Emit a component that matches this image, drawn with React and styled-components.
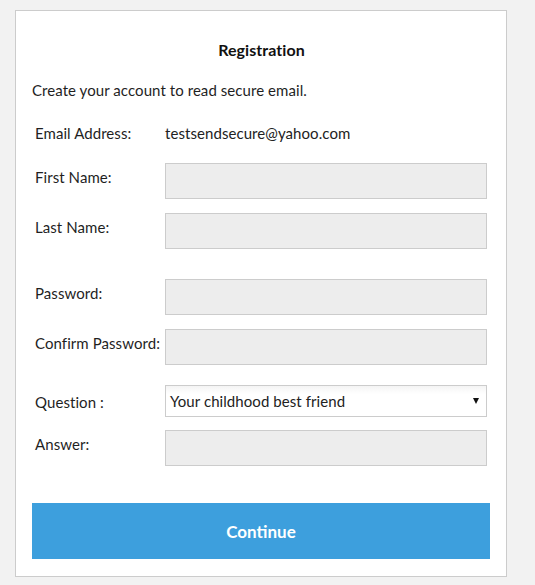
import React from "react";
import styled, { createGlobalStyle } from "styled-components";

const GlobalStyle = createGlobalStyle`
  html, body {
    margin: 0;
    padding: 0;
    background: #f2f2f2;
    font-family: Lato, "Liberation Sans", sans-serif;
    color: #1f1f1f;
    letter-spacing: 0.07px;
  }
  * { box-sizing: border-box; }
`;

const fields = [
  { label: "First Name:", gap: 20 },
  { label: "Last Name:", gap: 14 },
  { label: "Password:", gap: 30, type: "password" },
  { label: "Confirm Password:", gap: 14, type: "password" },
];

const App = () => {
  return (
    <>
      <GlobalStyle />
      <Card>
        <Title>Registration</Title>
        <Intro>Create your account to read secure email.</Intro>
        <Form>
          <Row $gap={0}>
            <Label $pt={0}>Email Address:</Label>
            <Value>testsendsecure@yahoo.com</Value>
          </Row>
          {fields.map((f) => (
            <Row key={f.label} $gap={f.gap}>
              <Label>{f.label}</Label>
              <Input type={f.type || "text"} />
            </Row>
          ))}
          <Row $gap={20}>
            <Label $pt={7}>Question :</Label>
            <Select>
              <span>Your childhood best friend</span>
              <Caret />
            </Select>
          </Row>
          <Row $gap={13}>
            <Label>Answer:</Label>
            <Input type="text" />
          </Row>
        </Form>
        <Button>Continue</Button>
      </Card>
    </>
  );
};

export default App;

const Card = styled.div`
  margin: 10px 0 0 15px;
  width: 492px;
  background: #fff;
  border: 1px solid #cccccc;
  padding: 29px 15px 17px 16px;
`;

const Title = styled.h1`
  margin: 0;
  text-align: center;
  font-size: 16px;
  line-height: 20px;
  font-weight: 700;
  color: #111;
`;

const Intro = styled.p`
  margin: 20px 0 0;
  font-size: 15px;
  line-height: 20px;
`;

const Form = styled.div`
  margin: 23px 3px 0 3px;
`;

const Row = styled.div`
  display: grid;
  grid-template-columns: 130px 322px;
  align-items: start;
  margin-top: ${(p) => p.$gap}px;
`;

const Label = styled.label`
  font-size: 15px;
  line-height: 20px;
  padding-top: ${(p) => (p.$pt === undefined ? 4 : p.$pt)}px;
  white-space: nowrap;
`;

const Value = styled.span`
  font-size: 15px;
  line-height: 20px;
  color: #222;
`;

const Input = styled.input`
  display: block;
  width: 322px;
  height: 36px;
  margin: 0;
  background: #ededed;
  border: 1px solid #cccccc;
  font-family: inherit;
  font-size: 15px;
  outline: none;
`;

const Select = styled.div`
  height: 32px;
  display: flex;
  align-items: center;
  justify-content: space-between;
  padding: 0 7px 0 4px;
  background: linear-gradient(#f4f4f4, #ffffff 8px);
  border: 1px solid #cccccc;
  font-size: 15px;
  color: #222;
`;

const Caret = styled.span`
  width: 0;
  height: 0;
  border-left: 3.5px solid transparent;
  border-right: 3.5px solid transparent;
  border-top: 6px solid #111;
`;

const Button = styled.button`
  display: block;
  width: 458px;
  height: 56px;
  margin: 37px 0 0 0;
  border: none;
  background: #3d9fdd;
  color: #fff;
  font-family: inherit;
  font-size: 17px;
  font-weight: 700;
  letter-spacing: 0;
  cursor: pointer;
`;
